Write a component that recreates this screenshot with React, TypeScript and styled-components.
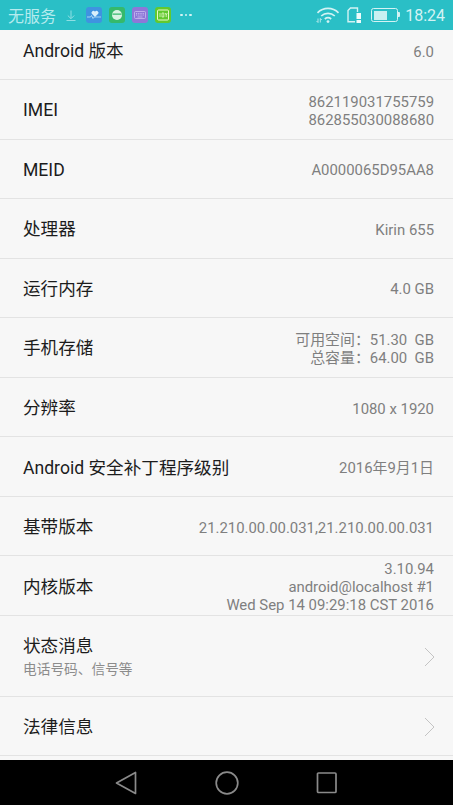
import React from "react";
import styled, { createGlobalStyle } from "styled-components";

const GlobalStyle = createGlobalStyle`
	html, body {
		margin: 0;
		padding: 0;
		background: #000;
	}
	* {
		box-sizing: border-box;
	}
`;

const rows = [
	{ label: "IMEI", values: ["862119031755759", "862855030088680"] },
	{ label: "MEID", values: ["A0000065D95AA8"] },
	{ label: "处理器", values: ["Kirin 655"] },
	{ label: "运行内存", values: ["4.0 GB"] },
	{ label: "手机存储", values: ["可用空间：51.30  GB", "总容量：64.00  GB"] },
	{ label: "分辨率", values: ["1080 x 1920"] },
	{ label: "Android 安全补丁程序级别", values: ["2016年9月1日"] },
	{ label: "基带版本", values: ["21.210.00.00.031,21.210.00.00.031"] },
	{ label: "内核版本", values: ["3.10.94", "android@localhost #1", "Wed Sep 14 09:29:18 CST 2016"] },
];

const App = () => {
	return (
		<Screen>
			<GlobalStyle />
			<StatusBar>
				<StatusLeft>
					<Carrier>无服务</Carrier>
					<svg width="12" height="13" viewBox="0 0 12 13" fill="none" stroke="#8fdfe3" strokeWidth="1">
						<path d="M6 1.500v8M2.800 6.500 6 9.700l3.200-3.200M1.500 11.500h9" />
					</svg>
					<AppIcon bg="#3f93e0">
						<svg width="16" height="16" viewBox="0 0 16 16" fill="none">
							<path d="M9 10 5.800 6.800a1.900 1.900 0 0 1 3.200-2.100 1.900 1.900 0 0 1 3.200 2.100z" fill="#d9f0fb" />
							<path d="M1 10h3.500l1-1.500 1.500 3 1.200-1.500H15" stroke="#bfe4f7" strokeWidth="0.8" />
						</svg>
					</AppIcon>
					<AppIcon bg="#35b96b">
						<svg width="16" height="16" viewBox="0 0 16 16" fill="none">
							<circle cx="8" cy="8" r="5" fill="#d7f3e2" />
							<path d="M3.500 7.200h9" stroke="#35b96b" strokeWidth="1.200" />
						</svg>
					</AppIcon>
					<AppIcon bg="#8e77d8">
						<svg width="16" height="16" viewBox="0 0 16 16" fill="none">
							<rect x="2.500" y="4.500" width="11" height="7" rx="1" stroke="#c9bdf0" strokeWidth="0.8" />
							<path d="M4 6.500h8M4 8h8" stroke="#c9bdf0" strokeWidth="0.9" strokeDasharray="1 0.8" />
							<path d="M5.500 10h5" stroke="#c9bdf0" strokeWidth="0.8" />
						</svg>
					</AppIcon>
					<AppIcon bg="#62c92e">
						<svg width="16" height="16" viewBox="0 0 16 16" fill="none">
							<rect x="2.500" y="3" width="11" height="10" rx="1" stroke="#e6f9c9" strokeWidth="1" />
							<path d="M5 6v4M7 6v4h1.800V6zM10.200 6l1 2 1-2M11.200 8v2" stroke="#e6f9c9" strokeWidth="0.8" />
						</svg>
					</AppIcon>
					<Dots>
						<i />
						<i />
						<i />
					</Dots>
				</StatusLeft>
				<StatusRight>
					<svg width="24" height="18" viewBox="0 0 24 18" fill="none" stroke="#d4f3f4" strokeWidth="1.700">
						<path d="M1.500 6.800C7.500 1 16.500 1 22.500 6.800" />
						<path d="M5.200 10c3.900-3.600 9.700-3.600 13.600 0" />
						<path d="M8.800 13c1.900-1.500 4.500-1.500 6.400 0" />
						<circle cx="12" cy="15.600" r="1.400" fill="#d4f3f4" stroke="none" />
						<path d="M2 12.500v4M0.500 15 2 16.500M4.300 16.500v-4M5.800 14 4.300 12.500" strokeWidth="0.8" />
					</svg>
					<svg width="15" height="16" viewBox="0 0 15 16" fill="none">
						<path d="M1 3.500 3.500 1H10.500V14.800H1z" stroke="#d4f3f4" strokeWidth="1.400" />
						<rect x="8" y="5" width="7" height="11" fill="#2abfc6" />
						<rect x="9.500" y="6" width="4.500" height="6" fill="#eefbfb" />
						<rect x="9.500" y="13" width="4.500" height="3" fill="#eefbfb" />
					</svg>
					<Battery>
						<BatteryFill />
					</Battery>
					<Clock>18:24</Clock>
				</StatusRight>
			</StatusBar>
			<List>
				<TopRow>
					<Label>Android 版本</Label>
					<Values>
						<span>6.0</span>
					</Values>
				</TopRow>
				{rows.map((row) => (
					<Row key={row.label}>
						<Label>{row.label}</Label>
						<Values>
							{row.values.map((v) => (
								<span key={v}>{v}</span>
							))}
						</Values>
					</Row>
				))}
				<TallRow>
					<div>
						<Label>状态消息</Label>
						<Sub>电话号码、信号等</Sub>
					</div>
					<Chevron />
				</TallRow>
				<Row>
					<Label>法律信息</Label>
					<Chevron />
				</Row>
			</List>
			<NavBar>
				<svg width="24" height="24" viewBox="0 0 24 24" fill="none" stroke="#8a8a8a" strokeWidth="1.700" strokeLinejoin="round">
					<path d="M21.500 1.500v21L2.500 12z" />
				</svg>
				<svg width="24" height="24" viewBox="0 0 24 24" fill="none" stroke="#8a8a8a" strokeWidth="1.700">
					<circle cx="12" cy="12" r="10.800" />
				</svg>
				<svg width="24" height="24" viewBox="0 0 24 24" fill="none" stroke="#8a8a8a" strokeWidth="1.700" strokeLinejoin="round">
					<rect x="2.500" y="2" width="18.500" height="19.500" rx="1" />
				</svg>
			</NavBar>
		</Screen>
	);
};

export default App;

const Chevron = () => (
	<ChevronSvg width="11" height="20" viewBox="0 0 11 20" fill="none" stroke="#c4c4c4" strokeWidth="1">
		<path d="M1 1l9 9-9 9" />
	</ChevronSvg>
);

const Screen = styled.div`
	width: 453px;
	height: 805px;
	display: flex;
	flex-direction: column;
	overflow: hidden;
	font-family: Roboto, "Noto Sans CJK SC", sans-serif;
`;

const StatusBar = styled.div`
	height: 30px;
	flex-shrink: 0;
	background: #2abfc6;
	display: flex;
	align-items: center;
	justify-content: space-between;
	padding: 0 8px 0 8px;
`;

const StatusLeft = styled.div`
	display: flex;
	align-items: center;
`;

const Carrier = styled.div`
	font-size: 16px;
	color: #b5ebee;
	margin-right: 8px;
	width: 49px;
`;

const AppIcon = styled.div<{ bg: string }>`
	width: 16px;
	height: 16px;
	border-radius: 3px;
	background: ${(props) => props.bg};
	display: flex;
	align-items: center;
	justify-content: center;
	margin-left: 7px;
	overflow: hidden;
	&:nth-of-type(2) {
		margin-left: 9px;
	}
`;

const Dots = styled.div`
	display: flex;
	gap: 2px;
	margin-left: 9px;
	i {
		width: 2.500px;
		height: 2.500px;
		border-radius: 50%;
		background: #d4f3f4;
	}
`;

const StatusRight = styled.div`
	display: flex;
	align-items: center;
	gap: 7px;
`;

const Battery = styled.div`
	position: relative;
	width: 27px;
	height: 14px;
	border: 1.300px solid #d4f3f4;
	border-radius: 2.500px;
	padding: 1.500px;
	margin-left: 2px;
	&::after {
		content: "";
		position: absolute;
		right: -3px;
		top: 3px;
		width: 2px;
		height: 5px;
		background: #d4f3f4;
		border-radius: 0 1px 1px 0;
	}
`;

const BatteryFill = styled.div`
	width: 13px;
	height: 100%;
	background: #c8f0f1;
`;

const Clock = styled.div`
	font-size: 16px;
	color: #d4f3f4;
`;

const List = styled.div`
	flex: 1;
	min-height: 0;
	background: #f7f7f7;
	overflow: hidden;
`;

const Row = styled.div`
	height: 59.550px;
	display: flex;
	align-items: center;
	justify-content: space-between;
	padding: 2px 19px 0 23px;
	border-bottom: 1px solid #e3e3e3;
`;

const TopRow = styled(Row)`
	height: 50px;
	padding-top: 0;
	padding-bottom: 7px;
`;

const TallRow = styled(Row)`
	height: 81px;
`;

const Label = styled.div`
	font-size: 17.600px;
	line-height: 22px;
	color: #1c1c1c;
	white-space: nowrap;
`;

const Sub = styled.div`
	font-size: 13.700px;
	line-height: 20px;
	color: #8c8c8c;
	margin-top: 2px;
`;

const Values = styled.div`
	display: flex;
	flex-direction: column;
	align-items: flex-end;
	padding-top: 1px;
	font-size: 14.900px;
	line-height: 18px;
	color: #7f7f7f;
	white-space: pre;
	text-align: right;
`;

const ChevronSvg = styled.svg`
	flex-shrink: 0;
	margin-right: -1px;
`;

const NavBar = styled.div`
	height: 45px;
	flex-shrink: 0;
	background: #000;
	display: flex;
	align-items: center;
	padding: 0 114px 0 114px;
	justify-content: space-between;
`;
